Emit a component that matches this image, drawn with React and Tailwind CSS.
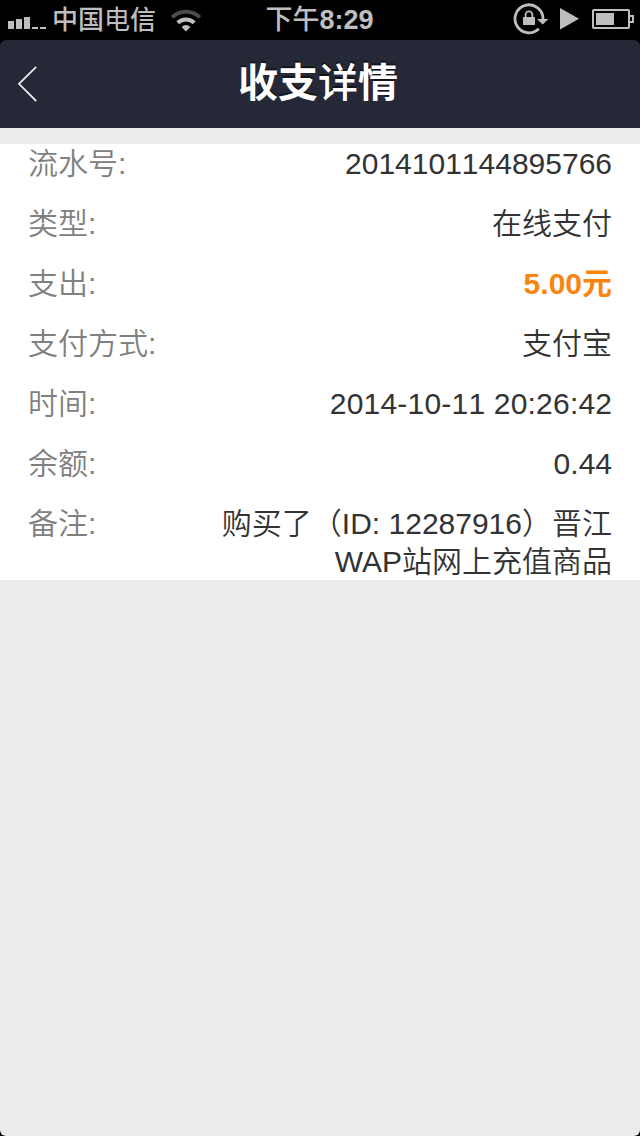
const FONT = "font-['Liberation_Sans','Noto_Sans_CJK_SC',sans-serif]";

const details = [
  { label: '流水号:', value: '2014101144895766' },
  { label: '类型:', value: '在线支付' },
  { label: '支出:', value: '5.00元', tone: 'font-bold text-[#f98510]' },
  { label: '支付方式:', value: '支付宝' },
  { label: '时间:', value: '2014-10-11 20:26:42', spacing: '-mr-[0.2px] tracking-[0.2px] [font-kerning:none]' },
  { label: '余额:', value: '0.44' },
  { label: '备注:', value: '购买了（ID: 12287916）晋江WAP站网上充值商品', spacing: '[font-kerning:normal]' },
];

// ── Status bar icons ──────────────────────────────────────────────────────────
function SignalIcon() {
  return (
    <svg viewBox="0 0 38 12" className="w-[38px] h-3" fill="currentColor">
      <rect x="0" y="4" width="6" height="8" />
      <rect x="8" y="2" width="6" height="10" />
      <rect x="16" y="0" width="6" height="12" />
      <rect x="24" y="10" width="6" height="2" />
      <rect x="32" y="10" width="6" height="2" />
    </svg>
  );
}

function WifiIcon() {
  return (
    <svg viewBox="0 0 32 24" className="w-8 h-6" fill="none" stroke="currentColor" strokeWidth="4">
      <path d="M2.2 9.4 A19.6 19.6 0 0 1 29.8 9.4" stroke="#4b4b4b" />
      <path d="M7.7 14.8 A12 12 0 0 1 24.3 14.8" />
      <path d="M11.6 19 Q16 15.2 20.4 19 L16 23.4 Z" fill="currentColor" stroke="none" />
    </svg>
  );
}

function RotationLockIcon() {
  return (
    <svg viewBox="0 0 36 32" className="w-9 h-8" fill="none" stroke="currentColor">
      <path d="M25.8 25.8 A14 14 0 1 1 30 15.5 V16" strokeWidth="2.8" />
      <path d="M24 16 H35.4 L29.7 21.6 Z" fill="currentColor" stroke="none" />
      <rect x="10" y="14" width="12" height="8" rx="0.6" fill="currentColor" stroke="none" />
      <path d="M12.6 14.5 V11.8 A3.4 3.4 0 0 1 19.4 11.8 V14.5" strokeWidth="1.8" />
    </svg>
  );
}

function PlayIcon() {
  return (
    <svg viewBox="0 0 19 22" className="w-[19px] h-[22px]" fill="currentColor">
      <path d="M0 0 L19 10.7 L0 21.4 Z" />
    </svg>
  );
}

function BatteryIcon() {
  return (
    <svg viewBox="0 0 42 20" className="w-[42px] h-5" fill="none" stroke="currentColor" strokeWidth="2">
      <rect x="1" y="1" width="36" height="18" rx="0.8" />
      <path d="M38 7 H41 V13 H38" />
      <rect x="4" y="4" width="18" height="12" fill="currentColor" stroke="none" />
    </svg>
  );
}

function StatusBar() {
  return (
    <div className="grid h-10 grid-cols-3 bg-black pl-2 pr-1.5 text-[26px] font-bold leading-10 text-[#bebebe]">
      <div className="flex h-10 items-center">
        <div className="pt-1.5"><SignalIcon /></div>
        <span className="ml-1.5 whitespace-nowrap leading-10 font-medium">
          中国<span className="font-normal">电</span>信
        </span>
        <div className="ml-[14px]"><WifiIcon /></div>
      </div>
      <div className="h-10 pr-[3px] text-center text-[27px] leading-[41px]">
        <span className="font-medium">下午</span>8:29
      </div>
      <div className="flex h-[38px] items-center justify-end">
        <RotationLockIcon />
        <div className="ml-[11px]"><PlayIcon /></div>
        <div className="ml-[13px]"><BatteryIcon /></div>
      </div>
    </div>
  );
}

function NavBar() {
  return (
    <header className="grid h-[88px] grid-cols-[80px_1fr_84px] items-center rounded-t-md bg-[#252836] text-white">
      <button aria-label="返回" className="pl-[17px]">
        <svg viewBox="0 0 20 36" className="-mt-px w-5 h-9" fill="none" stroke="#e6e6e8" strokeWidth="1.8">
          <path d="M19.2 0.8 L2 17.8 L19.2 35" />
        </svg>
      </button>
      <h1 className="pb-0.5 text-center text-[40px] font-bold leading-[60px] [text-shadow:0_-2px_0_rgba(0,0,0,0.5)]">
        收支<span className="font-medium">详</span>情
      </h1>
    </header>
  );
}

function DetailRow({ label, value, tone = 'text-[#333333]', spacing = '[font-kerning:none]' }) {
  return (
    <div className="flex justify-between">
      <dt className="shrink-0 text-[#808080]">{label}</dt>
      <dd className={`max-w-[400px] text-right ${tone} ${spacing}`}>{value}</dd>
    </div>
  );
}

export default function App() {
  return (
    <div className={`${FONT} flex h-[1136px] w-[640px] flex-col overflow-hidden bg-black`}>
      <StatusBar />
      <div className="flex-1 rounded-b-md bg-[#ebecee]">
        <div className="bg-black">
          <NavBar />
        </div>
        <dl className="mt-4 flex h-[436px] flex-col gap-[22px] bg-white pt-px pl-7 pr-7 text-[30px] font-[350] leading-[38px]">
          {details.map((row) => (
            <DetailRow key={row.label} {...row} />
          ))}
        </dl>
      </div>
    </div>
  );
}
